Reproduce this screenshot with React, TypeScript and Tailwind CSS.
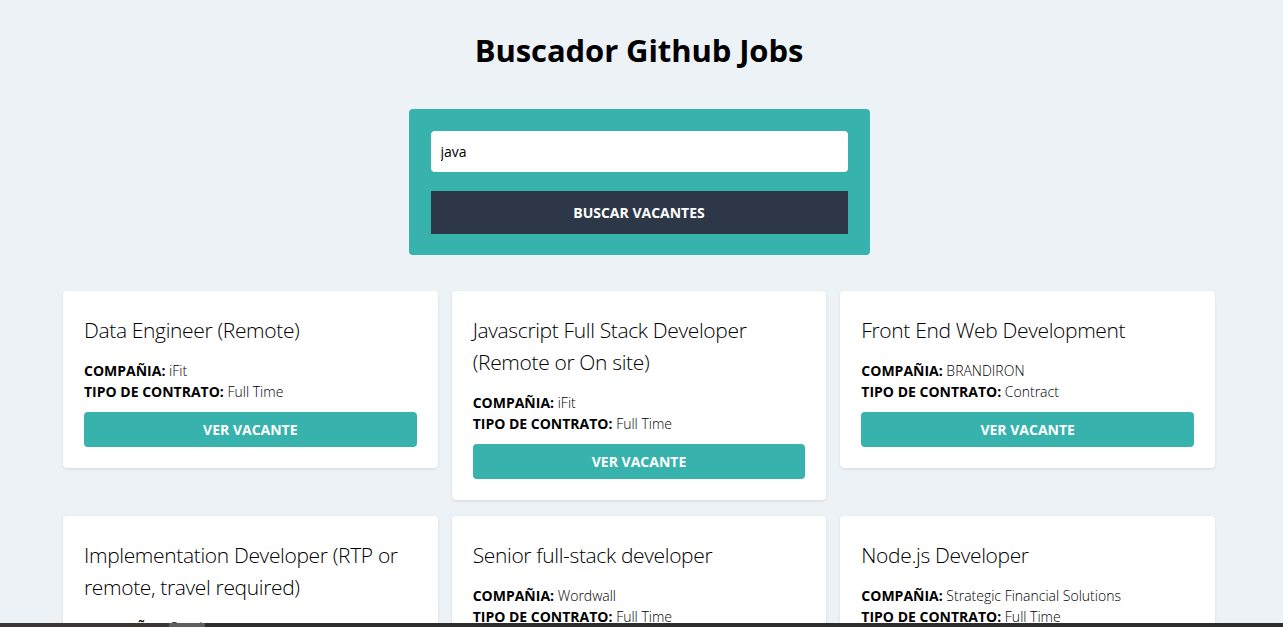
import React from "react";

interface Job {
  title: string;
  company: string;
  type: string;
}

const jobs: Job[] = [
  { title: "Data Engineer (Remote)", company: "iFit", type: "Full Time" },
  {
    title: "Javascript Full Stack Developer (Remote or On site)",
    company: "iFit",
    type: "Full Time",
  },
  { title: "Front End Web Development", company: "BRANDIRON", type: "Contract" },
  {
    title: "Implementation Developer (RTP or remote, travel required)",
    company: "Oracle",
    type: "Full Time",
  },
  { title: "Senior full-stack developer", company: "Wordwall", type: "Full Time" },
  {
    title: "Node.js Developer",
    company: "Strategic Financial Solutions",
    type: "Full Time",
  },
];

function JobCard({ job }: { job: Job }) {
  return (
    <div className="bg-white rounded shadow-[0_1px_3px_rgba(0,0,0,0.1)] px-[21px] pt-[23px] pb-[21px]">
      <h2 className="text-[21px] leading-[32px] font-light tracking-[-0.35px] text-black mb-[14px]">
        {job.title}
      </h2>
      <p className="text-[14px] leading-[21px]">
        <span className="font-bold">COMPAÑIA:</span>{" "}
        <span className="font-light">{job.company}</span>
      </p>
      <p className="text-[14px] leading-[21px]">
        <span className="font-bold">TIPO DE CONTRATO:</span>{" "}
        <span className="font-light">{job.type}</span>
      </p>
      <button className="mt-[10px] w-full h-[35px] rounded bg-[#38b2ac] text-white text-[14px] font-bold uppercase">
        Ver vacante
      </button>
    </div>
  );
}

export default function App() {
  return (
    <div
      className="min-h-screen bg-[#edf2f7] text-black"
      style={{ fontFamily: '"Open Sans", "Noto Sans", sans-serif' }}
    >
      <div className="w-[1278px] flex flex-col items-center">
        <h1 className="mt-[32px] text-[31px] leading-[36px] font-bold tracking-[-0.1px]">
          Buscador Github Jobs
        </h1>

        <form
          className="mt-[41px] w-[461px] bg-[#38b2ac] rounded p-[22px] pb-[21px] flex flex-col gap-[19px]"
          onSubmit={(e) => e.preventDefault()}
        >
          <input
            type="text"
            defaultValue="java"
            className="h-[41px] w-full rounded bg-white px-[10px] text-[14px] outline-none"
          />
          <button className="h-[43px] w-full bg-[#2d3748] text-white text-[14px] font-bold uppercase">
            Buscar vacantes
          </button>
        </form>

        <div className="mt-[36px] w-[1152px] grid grid-cols-3 gap-x-[14px] gap-y-[16px] items-start">
          {jobs.map((job) => (
            <JobCard key={job.title} job={job} />
          ))}
        </div>
      </div>

      {/* browser scrollbar strip at the bottom of the shot */}
      <div className="fixed bottom-0 left-0 right-0 h-[4px] bg-[#2d2d2d] flex">
        <div className="w-[169px] bg-[#3a3432]" />
        <div className="w-[36px] bg-[#5e5e5e]" />
      </div>
    </div>
  );
}
